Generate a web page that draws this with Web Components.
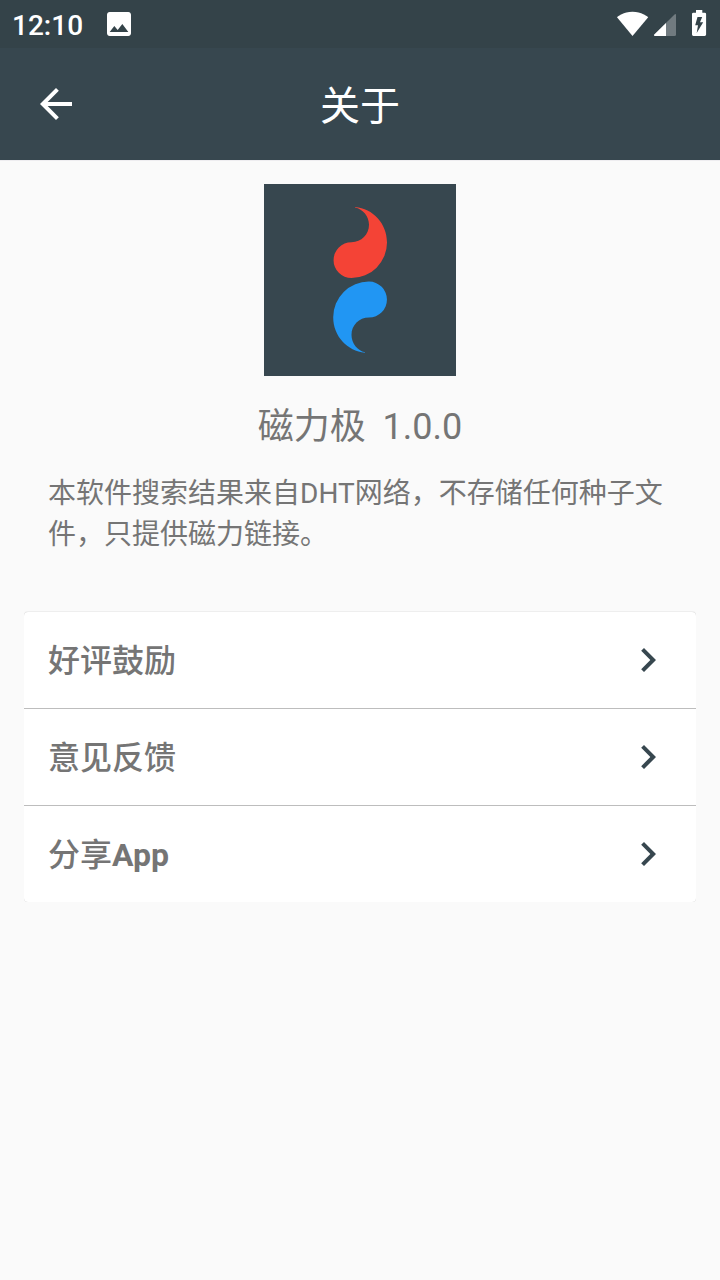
<!DOCTYPE html>
<html lang="zh-CN">
<head>
<meta charset="utf-8">
<title>关于</title>
<style>
    html, body {
        margin: 0;
        height: 100%;
    }

    body {
        background: #fafafa;
        color: #757575;
        font-family: Roboto, "Noto Sans CJK SC", sans-serif;
        --primary: #37474f;
        --primary-dark: #344349;
    }
</style>
</head>
<body>
<about-page>
    <status-bar slot="top" time="12:10"></status-bar>
    <app-header slot="top">关于</app-header>
    <app-logo></app-logo>
    <app-version name="磁力极" version="1.0.0"></app-version>
    <app-description>本软件搜索结果来自DHT网络，不存储任何种子文件，只提供磁力链接。</app-description>
    <menu-card>
        <menu-item>好评鼓励</menu-item>
        <menu-item>意见反馈</menu-item>
        <menu-item>分享<b>App</b></menu-item>
    </menu-card>
</about-page>

<script>
class BaseElement extends HTMLElement {
    constructor() {
        super();
        this.shadow = this.attachShadow({ mode: 'open' });
    }

    connectedCallback() {
        this.shadow.innerHTML = this.render();
    }
}

class AboutPage extends BaseElement {
    render() {
        return `
            <style>
                :host {
                    display: flex;
                    flex-direction: column;
                    height: 1280px;
                    overflow: hidden;
                }
                main {
                    display: flex;
                    flex-direction: column;
                    align-items: center;
                    padding: 24px 24px 0;
                }
            </style>
            <slot name="top"></slot>
            <main><slot></slot></main>
        `;
    }
}

class StatusBar extends BaseElement {
    render() {
        return `
            <style>
                :host {
                    display: flex;
                    align-items: center;
                    box-sizing: border-box;
                    height: 48px;
                    padding: 0 12px;
                    background: var(--primary-dark);
                    color: #fff;
                }
                .time {
                    width: 91px;
                    padding-top: 4px;
                    font-size: 28px;
                    font-weight: 500;
                    line-height: 32px;
                }
                .picture {
                    display: block;
                }
                .system {
                    display: flex;
                    margin-left: auto;
                }
                svg {
                    fill: currentColor;
                }
            </style>
            <span class="time">${this.getAttribute('time')}</span>
            <svg class="picture" width="32" height="32" viewBox="0 0 24 24">
                <path d="M21 19V5c0-1.1-.9-2-2-2H5c-1.1 0-2 .9-2 2v14c0 1.1.9 2 2 2h14c1.1 0 2-.9 2-2zM8.5 13.5l2.5 3.01L14.500 12l4.500 6H5l3.500-4.500z"/>
            </svg>
            <div class="system">
                <!-- wifi, signal, charging battery -->
                <svg width="92" height="48" viewBox="616 0 92 48">
                    <path d="M632.500 36 617 17.300C617.800 16.500 623.500 11.800 632.500 11.800S647.300 16.500 648.200 17.300z"/>
                    <path d="M674.800 14.300 654.300 34.500Q653.500 36 655 36H674.500Q676 36 676 34.500V14.800Q675.800 13.600 674.800 14.300z" fill-opacity=".3"/>
                    <path d="M666 23 654.300 34.500Q653.500 36 655 36H666z"/>
                    <path fill-rule="evenodd" d="M696 10h6.300v2.700h2.400q1.400 0 1.400 1.400v20.500q0 1.400-1.400 1.400h-11.300q-1.400 0-1.400-1.400V14.100q0-1.400 1.400-1.400h2.600zM697.500 17 695.200 25.200H698L696.700 33 703.200 22.300H700L702.200 17z"/>
                </svg>
            </div>
        `;
    }
}

class AppHeader extends BaseElement {
    render() {
        return `
            <style>
                :host {
                    display: grid;
                    grid-template-columns: 48px 1fr 48px;
                    align-items: center;
                    height: 112px;
                    padding: 0 32px;
                    background: var(--primary);
                    box-shadow: 0 1px 0 #eeedf0;
                    color: #fff;
                }
                svg {
                    display: block;
                    fill: currentColor;
                }
                h1 {
                    margin: 0;
                    padding-top: 6px;
                    font-size: 40px;
                    font-weight: 400;
                    line-height: 56px;
                    text-align: center;
                }
            </style>
            <svg width="48" height="48" viewBox="0 0 24 24">
                <path d="M20 11H7.830l5.590-5.590L12 4l-8 8 8 8 1.410-1.410L7.830 13H20v-2z"/>
            </svg>
            <h1><slot></slot></h1>
        `;
    }
}

class AppLogo extends BaseElement {
    render() {
        return `
            <style>
                :host {
                    display: block;
                    width: 192px;
                    height: 192px;
                    background: var(--primary);
                }
                svg {
                    display: block;
                }
            </style>
            <svg width="192" height="192" viewBox="0 0 192 192">
                <path fill="#f44336" d="M91 23C109 24.500 123 39.500 123 58.500A35.600 35.600 0 0 1 87.500 94.100A17.900 17.900 0 0 1 87.500 58.200C97.500 58.200 105 50.500 105 40.800C105 32.500 99 25 91 23.500z"/>
                <path fill="#2196f3" d="M101 168.700C83.500 167 69.200 152.200 69.200 133.200A35.600 35.600 0 0 1 105 97.600A17.900 17.900 0 0 1 105 133.500C95 133.500 87.500 141.200 87.500 150.900C87.500 159.200 93.500 166.500 101 168.200z"/>
            </svg>
        `;
    }
}

class AppVersion extends BaseElement {
    render() {
        return `
            <style>
                :host {
                    display: block;
                    margin-top: 25px;
                    font-size: 36px;
                    line-height: 52px;
                }
                span {
                    white-space: pre;
                    word-spacing: -0.5px;
                }
            </style>
            <span>${this.getAttribute('name')}  ${this.getAttribute('version')}</span>
        `;
    }
}

class AppDescription extends BaseElement {
    render() {
        return `
            <style>
                :host {
                    display: block;
                    align-self: stretch;
                    margin-top: 20px;
                    padding: 0 24px;
                    font-size: 28px;
                    line-height: 41px;
                }
            </style>
            <slot></slot>
        `;
    }
}

class MenuCard extends BaseElement {
    render() {
        return `
            <style>
                :host {
                    display: flex;
                    flex-direction: column;
                    gap: 1px;
                    align-self: stretch;
                    margin-top: 57px;
                    border-radius: 4px;
                    overflow: hidden;
                    background: #bdbdbd;
                    box-shadow: 0 -1px 0 #eee;
                }
            </style>
            <slot></slot>
        `;
    }
}

class MenuItem extends BaseElement {
    render() {
        return `
            <style>
                :host {
                    display: flex;
                    align-items: center;
                    justify-content: space-between;
                    height: 96px;
                    padding: 0 24px;
                    background: #fff;
                    font-size: 32px;
                    line-height: 48px;
                }
                .label {
                    padding-top: 2px;
                    font-weight: 500;
                }
                ::slotted(b) {
                    font-weight: 700;
                }
                svg {
                    display: block;
                    margin-bottom: 1px;
                    fill: var(--primary);
                }
            </style>
            <span class="label"><slot></slot></span>
            <svg width="48" height="48" viewBox="0 0 24 24">
                <path d="M10 6 8.590 7.410 13.170 12l-4.580 4.590L10 18l6-6z"/>
            </svg>
        `;
    }
}

customElements.define('about-page', AboutPage);
customElements.define('status-bar', StatusBar);
customElements.define('app-header', AppHeader);
customElements.define('app-logo', AppLogo);
customElements.define('app-version', AppVersion);
customElements.define('app-description', AppDescription);
customElements.define('menu-card', MenuCard);
customElements.define('menu-item', MenuItem);
</script>
</body>
</html>
